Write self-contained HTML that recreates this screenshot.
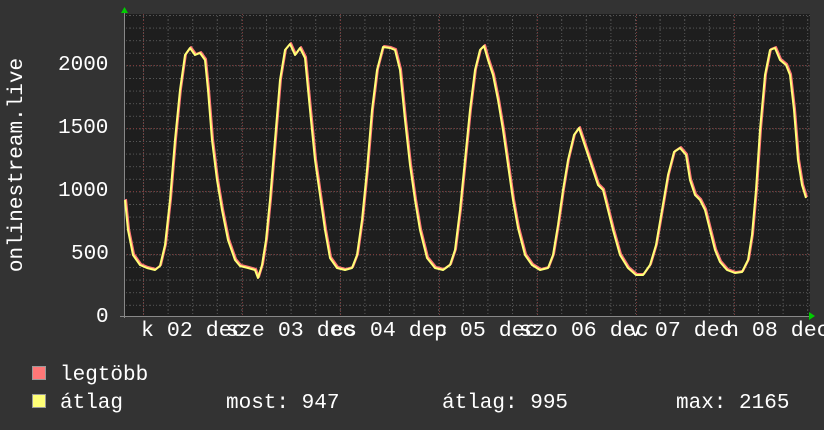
<!DOCTYPE html>
<html><head><meta charset="utf-8"><style>
body{margin:0;width:824px;height:430px;background:#333;overflow:hidden;font-family:"Liberation Mono",monospace;color:#fff}
.t{position:absolute;font-size:21px;white-space:pre;line-height:1}
.x{font-size:21.6px}
</style></head><body>
<svg width="824" height="430" style="position:absolute;left:0;top:0">
<defs>
<pattern id="mh" x="0" y="2.4" width="10" height="12.6" patternUnits="userSpaceOnUse"><line x1="0" y1="0.5" x2="10" y2="0.5" stroke="#555" stroke-dasharray="1,2"/></pattern>
<pattern id="mv" x="143" y="0" width="24.6" height="10" patternUnits="userSpaceOnUse"><line x1="0.5" y1="0" x2="0.5" y2="10" stroke="#555" stroke-dasharray="1,2"/></pattern>
</defs>
<rect x="124" y="14" width="686" height="302" fill="#1e1e1e"/>
<rect x="124" y="14" width="686" height="302" fill="url(#mh)"/>
<rect x="124" y="14" width="686" height="302" fill="url(#mv)"/>
<g stroke="#7a3a3a" stroke-dasharray="1,2">
<line x1="124" y1="65.5" x2="810" y2="65.5"/><line x1="124" y1="128.5" x2="810" y2="128.5"/><line x1="124" y1="191.5" x2="810" y2="191.5"/><line x1="124" y1="254.5" x2="810" y2="254.5"/>
<line x1="143.5" y1="14" x2="143.5" y2="316"/><line x1="242.5" y1="14" x2="242.5" y2="316"/><line x1="340.5" y1="14" x2="340.5" y2="316"/><line x1="439.5" y1="14" x2="439.5" y2="316"/><line x1="537.5" y1="14" x2="537.5" y2="316"/><line x1="636.5" y1="14" x2="636.5" y2="316"/><line x1="734.5" y1="14" x2="734.5" y2="316"/>
</g>
<line x1="124.5" y1="12" x2="124.5" y2="318" stroke="#888"/>
<line x1="120" y1="316.5" x2="812" y2="316.5" stroke="#888"/>
<polygon points="121,13 128,13 124.5,7" fill="#0c0"/>
<polygon points="809,312 809,320 815,316" fill="#0c0"/>
<g fill="none" stroke-width="2" stroke-linejoin="round">
<polyline stroke="#ff7777" transform="translate(1,-1)" points="125,200 128,230 133,255 140,265 147,268 155,270 160,266 165,245 170,200 175,140 180,90 185,55 190,48 195,55 200,53 205,60 208,90 212,140 217,180 222,210 228,240 235,260 240,266 248,268 255,270 258,278 262,265 266,240 270,200 275,140 280,80 285,50 290,44 295,55 300,48 305,58 310,110 315,160 320,195 325,230 330,258 337,268 345,270 352,268 357,255 362,220 367,170 372,110 377,70 383,47 390,48 395,50 400,70 405,120 410,165 415,200 420,230 427,258 435,268 443,270 450,265 455,250 460,210 465,160 470,110 475,70 480,50 484,46 488,60 493,75 498,100 503,130 508,165 513,200 518,228 525,255 532,265 540,270 548,268 553,255 558,225 563,190 568,160 574,135 579,128 583,140 588,155 593,170 598,185 603,190 608,210 613,230 620,255 628,268 636,275 643,275 650,265 656,245 662,210 668,175 674,152 680,148 686,155 690,180 695,195 700,200 705,210 710,230 715,250 720,262 727,270 735,273 742,272 748,260 752,235 756,190 760,130 765,75 770,50 775,48 780,60 786,65 790,75 794,110 798,160 802,185 806,198"/>
<polyline stroke="#ffff77" points="125,200 128,230 133,255 140,265 147,268 155,270 160,266 165,245 170,200 175,140 180,90 185,55 190,48 195,55 200,53 205,60 208,90 212,140 217,180 222,210 228,240 235,260 240,266 248,268 255,270 258,278 262,265 266,240 270,200 275,140 280,80 285,50 290,44 295,55 300,48 305,58 310,110 315,160 320,195 325,230 330,258 337,268 345,270 352,268 357,255 362,220 367,170 372,110 377,70 383,47 390,48 395,50 400,70 405,120 410,165 415,200 420,230 427,258 435,268 443,270 450,265 455,250 460,210 465,160 470,110 475,70 480,50 484,46 488,60 493,75 498,100 503,130 508,165 513,200 518,228 525,255 532,265 540,270 548,268 553,255 558,225 563,190 568,160 574,135 579,128 583,140 588,155 593,170 598,185 603,190 608,210 613,230 620,255 628,268 636,275 643,275 650,265 656,245 662,210 668,175 674,152 680,148 686,155 690,180 695,195 700,200 705,210 710,230 715,250 720,262 727,270 735,273 742,272 748,260 752,235 756,190 760,130 765,75 770,50 775,48 780,60 786,65 790,75 794,110 798,160 802,185 806,198"/>
</g>
<rect x="32.5" y="366.5" width="13" height="13" fill="#ff7777" stroke="#999"/>
<rect x="32.5" y="394.5" width="13" height="13" fill="#ffff77" stroke="#999"/>
<text x="22" y="165" transform="rotate(-90 22 165)" text-anchor="middle" fill="#fff" font-family="Liberation Mono,monospace" font-size="21">onlinestream.live</text>
</svg>
<div class="t" style="left:58px;top:55px">2000</div>
<div class="t" style="left:58px;top:118px">1500</div>
<div class="t" style="left:58px;top:181px">1000</div>
<div class="t" style="left:71px;top:244px">500</div>
<div class="t" style="left:96px;top:307px">0</div>
<div class="t x" style="left:141px;top:321px">k 02 dec</div>
<div class="t x" style="left:226px;top:321px">sze 03 dec</div>
<div class="t x" style="left:331px;top:321px">cs 04 dec</div>
<div class="t x" style="left:434px;top:321px">p 05 dec</div>
<div class="t x" style="left:519px;top:321px">szo 06 dec</div>
<div class="t x" style="left:629px;top:321px">v 07 dec</div>
<div class="t x" style="left:726px;top:321px">h 08 dec</div>
<div class="t" style="left:60px;top:365px">legtöbb</div>
<div class="t" style="left:60px;top:393px">átlag</div>
<div class="t" style="left:226px;top:393px">most: 947</div>
<div class="t" style="left:442px;top:393px">átlag: 995</div>
<div class="t" style="left:676px;top:393px">max: 2165</div>
</body></html>
